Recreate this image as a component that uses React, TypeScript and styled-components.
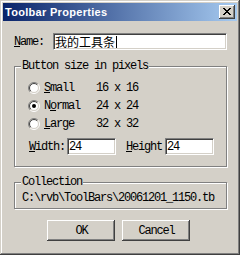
import React from "react";
import styled, { createGlobalStyle } from "styled-components";

const FACE = "#d4d0c8";
const MONO = `"Liberation Mono", "Noto Sans CJK SC", monospace`;

const Global = createGlobalStyle`
  html, body { margin: 0; padding: 0; background: ${FACE}; }
  body { width: 240px; height: 255px; overflow: hidden; }
`;

const Window = styled.div`
  box-sizing: border-box;
  width: 240px;
  height: 255px;
  padding: 3px;
  background: ${FACE};
  box-shadow: inset -1px -1px #404040, inset 1px 1px ${FACE},
    inset -2px -2px #808080, inset 2px 2px #ffffff;
  display: flex;
  flex-direction: column;
  font-family: ${MONO};
  font-size: 12px;
  line-height: 12px;
  letter-spacing: -1.2px;
  color: #000;
`;

const Caption = styled.div`
  height: 18px;
  display: flex;
  align-items: center;
  justify-content: space-between;
  padding: 0 2px;
  background: linear-gradient(to right, #0a246a, #a6caf0);
`;

const Title = styled.span`
  font-family: "Liberation Sans", Arial, sans-serif;
  font-weight: bold;
  font-size: 11px;
  line-height: 13px;
  letter-spacing: 0.3px;
  color: #fff;
`;

const CloseBtn = styled.div`
  box-sizing: border-box;
  width: 16px;
  height: 14px;
  background: ${FACE};
  box-shadow: inset -1px -1px #404040, inset 1px 1px #ffffff,
    inset -2px -2px #808080;
  display: flex;
  align-items: center;
  justify-content: center;
  padding: 0 1px 1px 0;
`;

const Client = styled.div`
  flex: 1;
  display: flex;
  flex-direction: column;
  padding: 12px 10px 0 11px;
`;

const NameRow = styled.div`
  display: flex;
  align-items: center;
  height: 17px;
`;

const Label = styled.span<{ $w: number; $ml?: number }>`
  width: ${(p) => p.$w}px;
  margin-left: ${(p) => p.$ml ?? 0}px;
  flex: none;
  white-space: pre;
  u { text-decoration: underline; text-underline-offset: 1px; }
`;

const Field = styled.div<{ $w?: number }>`
  box-sizing: border-box;
  height: 17px;
  ${(p) => (p.$w ? `width: ${p.$w}px; flex: none;` : "flex: 1;")}
  background: #fff;
  border: 1px solid;
  border-color: #808080 #ffffff #ffffff #808080;
  box-shadow: inset 1px 1px #404040, inset -1px -1px ${FACE};
  display: flex;
  align-items: center;
  padding-left: 1px;
  white-space: pre;
`;

const CjkText = styled.span`
  font-family: "Noto Sans CJK SC", sans-serif;
  font-size: 12px;
  letter-spacing: 0;
  line-height: 12px;
`;

const Caret = styled.span`
  width: 1px;
  height: 12px;
  margin-left: 1px;
  background: #000;
`;

const Group = styled.div<{ $mt: number; $pb: number }>`
  display: flex;
  flex-direction: column;
  margin-top: ${(p) => p.$mt}px;
  padding-bottom: ${(p) => p.$pb}px;
  border: 1px solid #808080;
  box-shadow: inset 1px 1px #ffffff, 1px 1px #ffffff;
`;

const Legend = styled.div`
  align-self: flex-start;
  height: 12px;
  margin: -7px 0 0 6px;
  padding: 0 1px;
  background: ${FACE};
  white-space: pre;
`;

const RadioList = styled.div`
  display: flex;
  flex-direction: column;
  margin-top: 7px;
`;

const RadioRow = styled.div`
  display: grid;
  grid-template-columns: 12px 48px auto;
  column-gap: 4px;
  align-items: center;
  height: 18px;
  padding-left: 13px;
  white-space: pre;
  u { text-decoration: underline; text-underline-offset: 1px; }
`;

const SizeRow = styled.div`
  display: flex;
  align-items: center;
  height: 17px;
  margin-top: 5px;
  padding-left: 14px;
  u { text-decoration: underline; text-underline-offset: 1px; }
`;

const PathText = styled.div`
  margin-top: 4px;
  padding-left: 7px;
  height: 12px;
  white-space: pre;
`;

const ButtonRow = styled.div`
  display: flex;
  gap: 7px;
  margin-top: 11px;
  padding-left: 33px;
`;

const Button = styled.div`
  box-sizing: border-box;
  width: 68px;
  height: 21px;
  background: ${FACE};
  box-shadow: inset -1px -1px #404040, inset 1px 1px #ffffff,
    inset -2px -2px #808080, inset 2px 2px ${FACE};
  display: flex;
  align-items: center;
  justify-content: center;
  padding-left: 1px;
`;

const CloseGlyph = () => (
  <svg width="8" height="7" viewBox="0 0 8 7" shapeRendering="crispEdges">
    <rect x="0" y="0" width="2" height="1" fill="#000" />
    <rect x="6" y="0" width="2" height="1" fill="#000" />
    <rect x="1" y="1" width="2" height="1" fill="#000" />
    <rect x="5" y="1" width="2" height="1" fill="#000" />
    <rect x="2" y="2" width="4" height="1" fill="#000" />
    <rect x="3" y="3" width="2" height="1" fill="#000" />
    <rect x="2" y="4" width="4" height="1" fill="#000" />
    <rect x="1" y="5" width="2" height="1" fill="#000" />
    <rect x="5" y="5" width="2" height="1" fill="#000" />
    <rect x="0" y="6" width="2" height="1" fill="#000" />
    <rect x="6" y="6" width="2" height="1" fill="#000" />
  </svg>
);

const arc = (r: number, topLeft: boolean) => {
  const d = r * Math.SQRT1_2;
  const ll = `${6 - d} ${6 + d}`;
  const ur = `${6 + d} ${6 - d}`;
  return topLeft ? `M${ll} A${r} ${r} 0 0 1 ${ur}` : `M${ur} A${r} ${r} 0 0 1 ${ll}`;
};

const Radio = ({ checked }: { checked?: boolean }) => (
  <svg width="12" height="12" viewBox="0 0 12 12">
    <circle cx="6" cy="6" r="4.5" fill="#fff" />
    <path d={arc(5.5, true)} stroke="#808080" strokeWidth="1" fill="none" />
    <path d={arc(5.5, false)} stroke="#ffffff" strokeWidth="1" fill="none" />
    <path d={arc(4.5, true)} stroke="#404040" strokeWidth="1" fill="none" />
    <path d={arc(4.5, false)} stroke={FACE} strokeWidth="1" fill="none" />
    {checked && <circle cx="6" cy="6" r="2" fill="#000" />}
  </svg>
);

const sizes = [
  { pre: "", key: "S", post: "mall", dim: "16 x 16", checked: false },
  { pre: "N", key: "o", post: "rmal", dim: "24 x 24", checked: true },
  { pre: "", key: "L", post: "arge", dim: "32 x 32", checked: false },
];

export default function App() {
  return (
    <>
      <Global />
      <Window>
        <Caption>
          <Title>Toolbar Properties</Title>
          <CloseBtn>
            <CloseGlyph />
          </CloseBtn>
        </Caption>
        <Client>
          <NameRow>
            <Label $w={39}>
              <u>N</u>ame:
            </Label>
            <Field>
              <CjkText>我的工具条</CjkText>
              <Caret />
            </Field>
          </NameRow>

          <Group $mt={16} $pb={11}>
            <Legend>Button size in pixels</Legend>
            <RadioList>
              {sizes.map((s) => (
                <RadioRow key={s.dim}>
                  <Radio checked={s.checked} />
                  <span>
                    {s.pre}
                    <u>{s.key}</u>
                    {s.post}
                  </span>
                  <span>{s.dim}</span>
                </RadioRow>
              ))}
            </RadioList>
            <SizeRow>
              <Label $w={38}>
                <u>W</u>idth:
              </Label>
              <Field $w={49}>24</Field>
              <Label $w={39} $ml={10}>
                <u>H</u>eight
              </Label>
              <Field $w={49}>24</Field>
            </SizeRow>
          </Group>

          <Group $mt={15} $pb={4}>
            <Legend>Collection</Legend>
            <PathText>C:\rvb\ToolBars\20061201_1150.tb</PathText>
          </Group>

          <ButtonRow>
            <Button>OK</Button>
            <Button>Cancel</Button>
          </ButtonRow>
        </Client>
      </Window>
    </>
  );
}
